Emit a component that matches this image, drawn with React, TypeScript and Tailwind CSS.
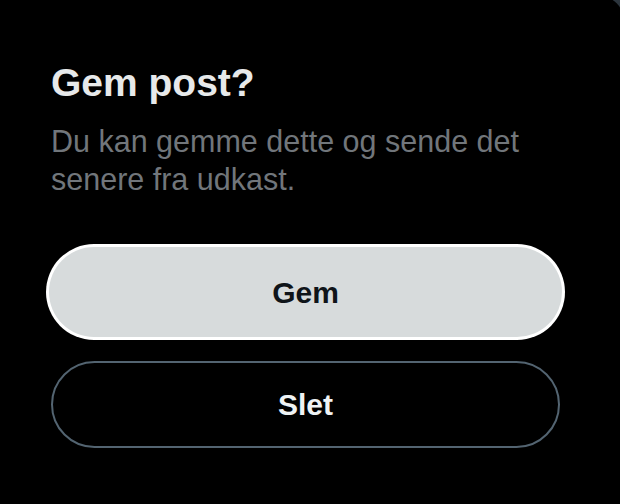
export default function App() {
  return (
    <div
      className="h-[504px] w-[620px] overflow-hidden bg-[#2c353d]"
      style={{ fontFamily: '"Liberation Sans", Arial, sans-serif' }}
    >
      <div className="-mt-[6px] h-[520px] w-[626px] rounded-tr-[32px] bg-black pl-[51px] pt-[66px]">
        <div className="flex w-[509px] flex-col">
          <h1 className="text-[39px] font-bold leading-[46px] text-[#e7e9ea]">Gem post?</h1>
          <p className="mt-[16px] text-[30.5px] leading-[38px] text-[#71767b]">
            Du kan gemme dette og sende det senere fra udkast.
          </p>

          <button className="-mx-[2px] mt-[49px] flex h-[90px] items-center justify-center rounded-full bg-[#d7dbdc] text-[30px] font-bold text-[#0f1419] ring-[3px] ring-white">
            Gem
          </button>
          <button className="mt-[24px] flex h-[87px] items-center justify-center rounded-full border-2 border-[#536471] text-[30px] font-bold text-[#eff3f4]">
            Slet
          </button>
        </div>
      </div>
    </div>
  );
}
